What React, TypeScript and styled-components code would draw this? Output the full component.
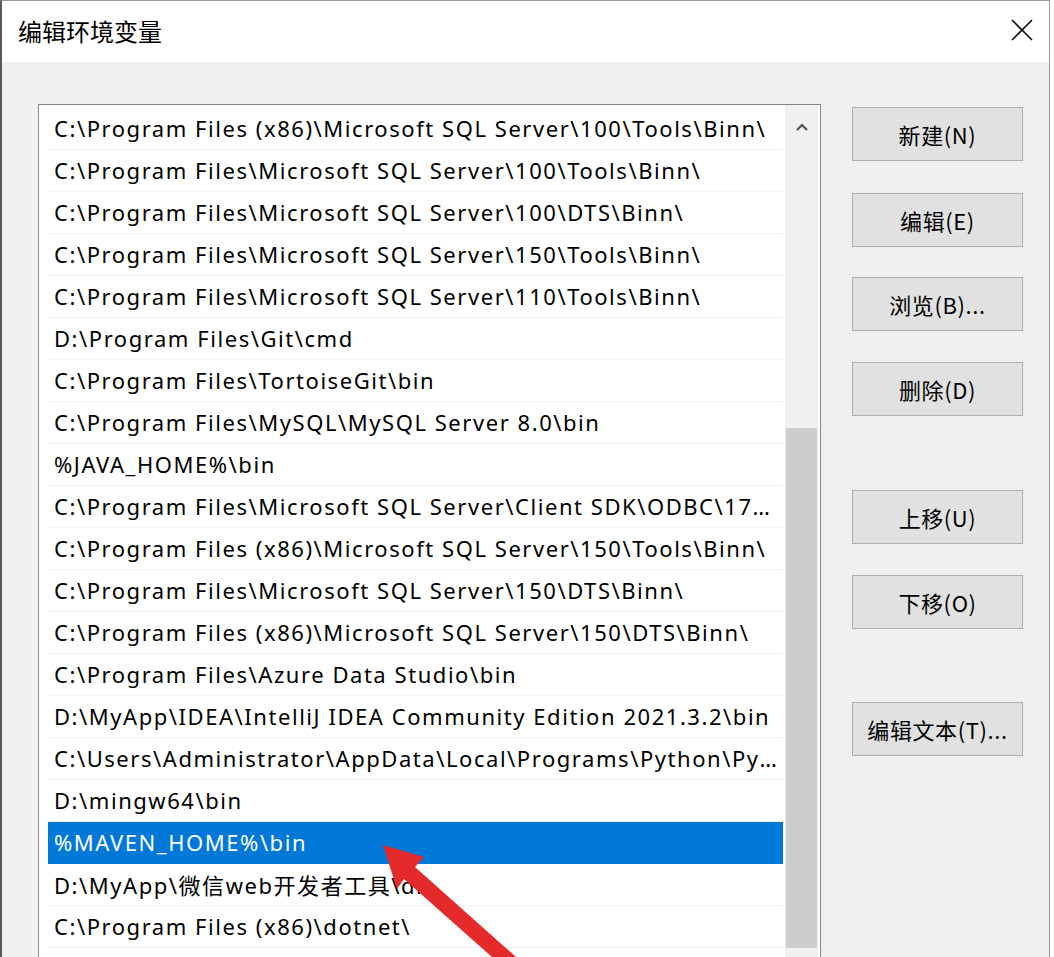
import React from "react";
import styled, { createGlobalStyle } from "styled-components";

const GlobalStyle = createGlobalStyle`
  html, body {
    margin: 0;
    padding: 0;
    background: #ffffff;
    overflow: hidden;
  }
  * {
    box-sizing: border-box;
  }
`;

const FONT = `"Noto Sans", "Noto Sans CJK SC", sans-serif`;

const paths = [
  "C:\\Program Files (x86)\\Microsoft SQL Server\\100\\Tools\\Binn\\",
  "C:\\Program Files\\Microsoft SQL Server\\100\\Tools\\Binn\\",
  "C:\\Program Files\\Microsoft SQL Server\\100\\DTS\\Binn\\",
  "C:\\Program Files\\Microsoft SQL Server\\150\\Tools\\Binn\\",
  "C:\\Program Files\\Microsoft SQL Server\\110\\Tools\\Binn\\",
  "D:\\Program Files\\Git\\cmd",
  "C:\\Program Files\\TortoiseGit\\bin",
  "C:\\Program Files\\MySQL\\MySQL Server 8.0\\bin",
  "%JAVA_HOME%\\bin",
  "C:\\Program Files\\Microsoft SQL Server\\Client SDK\\ODBC\\170\\Tools\\Binn\\",
  "C:\\Program Files (x86)\\Microsoft SQL Server\\150\\Tools\\Binn\\",
  "C:\\Program Files\\Microsoft SQL Server\\150\\DTS\\Binn\\",
  "C:\\Program Files (x86)\\Microsoft SQL Server\\150\\DTS\\Binn\\",
  "C:\\Program Files\\Azure Data Studio\\bin",
  "D:\\MyApp\\IDEA\\IntelliJ IDEA Community Edition 2021.3.2\\bin",
  "C:\\Users\\Administrator\\AppData\\Local\\Programs\\Python\\Python39\\Scripts\\",
  "D:\\mingw64\\bin",
  "%MAVEN_HOME%\\bin",
  "D:\\MyApp\\微信web开发者工具\\dll",
  "C:\\Program Files (x86)\\dotnet\\",
];

const SELECTED = 17;

const buttons = [
  { label: "新建(N)", gap: 0 },
  { label: "编辑(E)", gap: 32 },
  { label: "浏览(B)...", gap: 30 },
  { label: "删除(D)", gap: 31 },
  { label: "上移(U)", gap: 74 },
  { label: "下移(O)", gap: 31 },
  { label: "编辑文本(T)...", gap: 73 },
];

const Window = styled.div`
  position: relative;
  width: 1050px;
  height: 957px;
  display: flex;
  flex-direction: column;
  border-left: 2px solid #5a5a5a;
  border-right: 1px solid #9a9a9a;
  border-top: 1px solid #9a9a9a;
  overflow: hidden;
  font-family: ${FONT};
`;

const TitleBar = styled.div`
  height: 61px;
  flex-shrink: 0;
  background: #ffffff;
  display: flex;
  align-items: center;
  justify-content: space-between;
  padding: 0 16px 0 16px;
`;

const Title = styled.div`
  font-family: "Noto Sans CJK SC", sans-serif;
  font-size: 24px;
  color: #000;
  margin-top: -2px;
`;

const CloseButton = styled.div`
  width: 22px;
  height: 22px;
  display: flex;
  margin-top: -3px;
`;

const Body = styled.div`
  flex: 1;
  background: #f0f0f0;
  display: flex;
  align-items: flex-start;
  padding: 42px 0 0 36px;
`;

const ListBox = styled.div`
  width: 783px;
  height: 900px;
  flex-shrink: 0;
  background: #ffffff;
  border: 1px solid #828790;
  display: flex;
`;

const Rows = styled.div`
  flex: 1;
  min-width: 0;
  padding: 3px 2px 0 9px;
`;

const Row = styled.div<{ $selected?: boolean }>`
  height: 42px;
  display: flex;
  align-items: center;
  padding: 0 4px 2px 6px;
  border-bottom: 1px solid ${({ $selected }) => ($selected ? "#0078d7" : "#f0f0f0")};
  background: ${({ $selected }) => ($selected ? "#0078d7" : "transparent")};
  color: ${({ $selected }) => ($selected ? "#ffffff" : "#000000")};
  font-size: 22px;
  white-space: nowrap;
  overflow: hidden;
`;

const RowText = styled.span`
  overflow: hidden;
  text-overflow: ellipsis;
  letter-spacing: 1.55px;
`;

const ScrollBar = styled.div`
  width: 33px;
  flex-shrink: 0;
  background: #f0f0f0;
  display: flex;
  flex-direction: column;
  align-items: center;
  margin-right: 2px;
`;

const ArrowBox = styled.div`
  height: 44px;
  display: flex;
  align-items: center;
  justify-content: center;
  flex-shrink: 0;
`;

const Thumb = styled.div`
  width: 31px;
  margin-top: 279px;
  height: 520px;
  background: #cdcdcd;
`;

const ButtonColumn = styled.div`
  display: flex;
  flex-direction: column;
  margin-left: 31px;
  padding-top: 3px;
`;

const Button = styled.div<{ $gap: number }>`
  width: 171px;
  height: 54px;
  margin-top: ${({ $gap }) => $gap}px;
  background: #e1e1e1;
  border: 1px solid #adadad;
  display: flex;
  align-items: center;
  justify-content: center;
  font-family: "Noto Sans CJK SC", sans-serif;
  font-size: 22px;
  letter-spacing: 0.6px;
  color: #000;
`;

const Overlay = styled.svg`
  position: absolute;
  left: -2px;
  top: -1px;
  pointer-events: none;
`;

export default function App() {
  return (
    <>
      <GlobalStyle />
      <Window>
        <TitleBar>
          <Title>编辑环境变量</Title>
          <CloseButton>
            <svg width="22" height="22" viewBox="0 0 22 22">
              <path d="M1 1 L21 21 M21 1 L1 21" stroke="#111" strokeWidth="1.6" fill="none" />
            </svg>
          </CloseButton>
        </TitleBar>
        <Body>
          <ListBox>
            <Rows>
              {paths.map((p, i) => (
                <Row key={i} $selected={i === SELECTED}>
                  <RowText>{p}</RowText>
                </Row>
              ))}
            </Rows>
            <ScrollBar>
              <ArrowBox>
                <svg width="14" height="10" viewBox="0 0 14 10">
                  <path d="M2 8 L7 3 L12 8" stroke="#505050" strokeWidth="2.2" fill="none" />
                </svg>
              </ArrowBox>
              <Thumb />
            </ScrollBar>
          </ListBox>
          <ButtonColumn>
            {buttons.map((b) => (
              <Button key={b.label} $gap={b.gap}>
                {b.label}
              </Button>
            ))}
          </ButtonColumn>
        </Body>
        <Overlay width="1054" height="957" viewBox="0 0 1054 957">
          <polygon
            points="383,845 424,857 415,867 516,957 492,957 404,879 397,889"
            fill="#e42a2a"
          />
        </Overlay>
      </Window>
    </>
  );
}
